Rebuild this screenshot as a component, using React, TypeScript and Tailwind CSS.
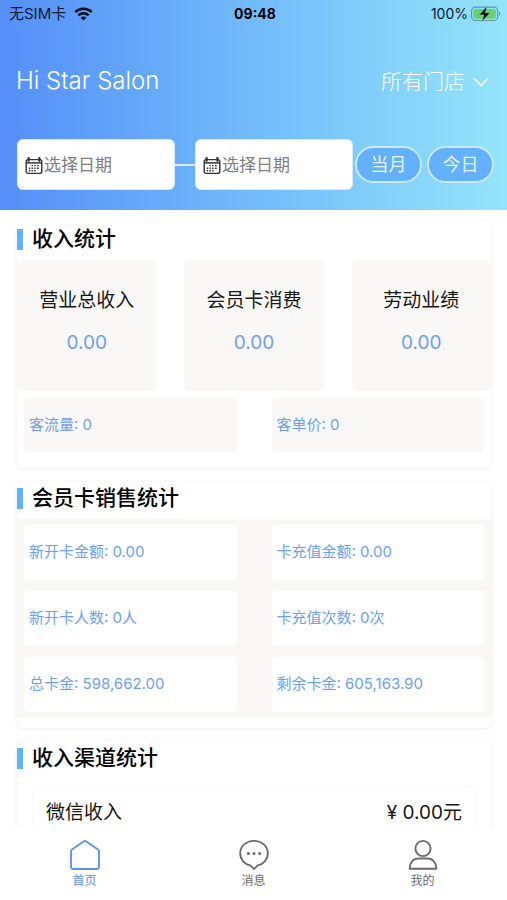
import type { ReactNode } from "react";

const CalendarIcon = () => (
  <svg width="18" height="18" viewBox="0 0 18 18" fill="none" stroke="#333" className="shrink-0">
    <rect x="1.2" y="2.6" width="15.6" height="13.8" rx="1.8" strokeWidth="1.4" />
    <path d="M1.2 5.9h15.6" strokeWidth="1.5" />
    <path d="M3.6 1v2.8M14.4 1v2.8" strokeWidth="2.2" strokeLinecap="round" />
    <path
      d="M6.5 8.6h1.4M9.2 8.6h1.4M11.9 8.6h1.8M3.8 11.2h1.4M6.5 11.2h1.4M9.2 11.2h1.4M11.9 11.2h1.8M3.8 13.8h1.4M6.5 13.8h1.4M9.2 13.8h1.4"
      strokeWidth="1.4"
    />
  </svg>
);

const StatusBar = () => (
  <div className="grid grid-cols-3 items-center h-7 pl-[9px] pr-[6px] text-sm leading-5 text-[#0b1a30]">
    <div className="flex items-center gap-2">
      <span className="text-[15px]">无SIM卡</span>
      <svg width="19" height="14" viewBox="0 0 19 14" fill="none" stroke="#05101f" strokeWidth="2.6">
        <path d="M1.2 5.1C5.9.6 13.1.6 17.8 5.1" />
        <path d="M4.3 8.4c3-2.8 7.4-2.8 10.4 0" />
        <path d="M9.5 13.6 6.6 10.7c1.7-1.5 4.1-1.5 5.8 0z" fill="#05101f" stroke="none" />
      </svg>
    </div>
    <span className="text-center font-bold text-black">09:48</span>
    <div className="flex items-center justify-end gap-[3px]">
      <span>100%</span>
      <svg width="30" height="16" viewBox="0 0 30 16">
        <rect x=".6" y="1.1" width="26" height="13.4" rx="3.8" fill="none" stroke="#5f93a8" strokeWidth="1.1" />
        <rect x="2.4" y="2.9" width="22.4" height="9.8" rx="2.2" fill="#68cf6c" />
        <path d="M28 5.6c1.8.7 1.8 3.8 0 4.5z" fill="#5f93a8" />
        <path d="M16.2 0 8 8.9h4.9L10.8 15.8 19.2 6.7h-5z" fill="#04100c" stroke="#8ce0c0" strokeWidth=".5" />
      </svg>
    </div>
  </div>
);

const DateField = ({ label }: { label: string }) => (
  <label className="flex flex-1 min-w-0 items-center h-[51px] pt-0.5 pl-[7px] bg-white border border-[#dbe7f7] rounded-md">
    <CalendarIcon />
    <input
      type="text"
      aria-label={label}
      placeholder="选择日期"
      className="w-full min-w-0 pl-px text-[17px] outline-none placeholder:text-[#808080]"
    />
  </label>
);

const PillButton = ({ children }: { children: ReactNode }) => (
  <button className="w-[67px] h-[37px] pt-px shrink-0 rounded-full border-2 border-[#c9e9ff] bg-[#62b1fa] text-[18px] leading-5 text-[#e6f5ff]">
    {children}
  </button>
);

const Section = ({ title, children }: { title: string; children: ReactNode }) => (
  <section className="flex flex-col shrink-0 bg-white rounded-md shadow-[0_1px_4px_rgba(0,0,0,0.08)]">
    <h2 className="flex items-center gap-[9px] h-[34px] mb-1 text-[21px] leading-8 font-medium text-black">
      <span className="w-1.5 h-[21px] bg-[#61b3fc]"></span>
      {title}
    </h2>
    {children}
  </section>
);

const totals = [
  { name: "营业总收入", value: "0.00" },
  { name: "会员卡消费", value: "0.00" },
  { name: "劳动业绩", value: "0.00" },
];

const cardSales = [
  "新开卡金额: 0.00",
  "卡充值金额: 0.00",
  "新开卡人数: 0人",
  "卡充值次数: 0次",
  "总卡金: 598,662.00",
  "剩余卡金: 605,163.90",
];

const App = () => {
  return (
    <div className="flex flex-col h-dvh bg-white font-[Inter,'Noto_Sans_CJK_SC',sans-serif]">
      <header className="shrink-0 h-[210px] bg-linear-to-r from-[#558ff8] to-[#94e5fa]">
        <StatusBar />
        <div className="flex items-center justify-between h-[106px] pl-4 pr-[18px] text-white">
          <h1 className="text-[24px] leading-8 font-light">Hi Star Salon</h1>
          <button className="flex items-center gap-2 pt-0.5 text-[21px] leading-8 font-light">
            所有门店
            <svg width="16" height="10" viewBox="0 0 16 10" fill="none" stroke="currentColor" strokeWidth="1.6">
              <path d="M.8 1.2 8 8.4l7.2-7.2" />
            </svg>
          </button>
        </div>
        <div className="flex items-center h-[61px] pl-[17px] pr-[13px]">
          <DateField label="开始日期" />
          <span className="w-5 h-0.5 bg-[#d8ebff]"></span>
          <DateField label="结束日期" />
          <div className="flex gap-[5px] pl-0.5">
            <PillButton>当月</PillButton>
            <PillButton>今日</PillButton>
          </div>
        </div>
      </header>

      <main className="flex flex-col flex-1 min-h-0 gap-[13px] pt-3 pl-[17px] pr-4 overflow-y-auto [scrollbar-width:none]">
        <Section title="收入统计">
          <ul className="grid grid-cols-3 gap-7">
            {totals.map((item) => (
              <li
                key={item.name}
                className="flex flex-col items-center gap-3 h-[131px] pt-[26px] rounded-md bg-[#faf8f7]">
                <span className="text-[19px] leading-[30px] text-[#161616]">{item.name}</span>
                <span className="text-[19px] leading-[30px] text-[#6c9ff5]">{item.value}</span>
              </li>
            ))}
          </ul>
          <ul className="grid grid-cols-2 gap-x-[35px] px-[7px] pt-[7px] pb-4">
            {["客流量: 0", "客单价: 0"].map((text) => (
              <li
                key={text}
                className="flex items-center h-[54px] px-[5px] rounded-sm bg-[#faf8f7] text-[15px] text-[#6c9ff5]">
                {text}
              </li>
            ))}
          </ul>
        </Section>

        <Section title="会员卡销售统计">
          <ul className="grid grid-cols-2 gap-x-[35px] gap-y-[11px] mb-[10px] px-[7px] py-1.5 bg-[#faf8f7]">
            {cardSales.map((text) => (
              <li
                key={text}
                className="flex items-center h-[55px] px-[5px] rounded-sm bg-white text-[15px] text-[#6c9ff5]">
                {text}
              </li>
            ))}
          </ul>
        </Section>

        <Section title="收入渠道统计">
          <div className="flex items-center justify-between h-[52px] mx-4 mt-2 mb-4 px-[13px] rounded-md shadow-[0_0_3px_rgba(0,0,0,0.07)] text-[19px] leading-7 text-[#161616]">
            <span>微信收入</span>
            <span>¥ 0.00元</span>
          </div>
        </Section>
      </main>

      <nav className="grid grid-cols-3 shrink-0 h-[73px] bg-white text-xs leading-4 text-[#6b6b6b]">
        <a href="#home" className="flex flex-col items-center gap-0.5 pt-3 text-[#5d92f3]">
          <svg width="32" height="32" viewBox="0 0 32 32" fill="none" stroke="currentColor" strokeWidth="1.9">
            <path
              d="M15 2.3a1.8 1.8 0 0 1 2 0l12 8.2a2.2 2.2 0 0 1 1 1.9v15.4a2.2 2.2 0 0 1-2.2 2.2H4.2A2.2 2.2 0 0 1 2 27.8V12.4a2.2 2.2 0 0 1 1-1.9z"
              strokeLinejoin="round"
            />
          </svg>
          首页
        </a>
        <a href="#messages" className="flex flex-col items-center gap-0.5 pt-3">
          <svg width="32" height="32" viewBox="0 0 32 32" fill="none" stroke="currentColor" strokeWidth="1.8">
            <path
              d="M16 1.8c7.8 0 13.8 5.4 13.8 12.5 0 6.3-4.4 11-10.4 12.4L16 30.2l-3.4-3.5C6.6 25.3 2.2 20.6 2.2 14.3 2.2 7.2 8.2 1.8 16 1.8z"
              strokeLinejoin="round"
            />
            <g fill="currentColor" stroke="none">
              <circle cx="10.4" cy="14.5" r="1.5" />
              <circle cx="16" cy="14.5" r="1.5" />
              <circle cx="21.6" cy="14.5" r="1.5" />
            </g>
          </svg>
          消息
        </a>
        <a href="#mine" className="flex flex-col items-center gap-0.5 pt-3">
          <svg width="32" height="32" viewBox="0 0 32 32" fill="none" stroke="currentColor" strokeWidth="1.9">
            <circle cx="16" cy="9.5" r="7.6" />
            <path d="M2.6 29.7c0-6.2 3.6-10.2 9-10.2h8.8c5.4 0 9 4 9 10.2z" strokeLinejoin="round" />
          </svg>
          我的
        </a>
      </nav>
    </div>
  );
};
export default App;
